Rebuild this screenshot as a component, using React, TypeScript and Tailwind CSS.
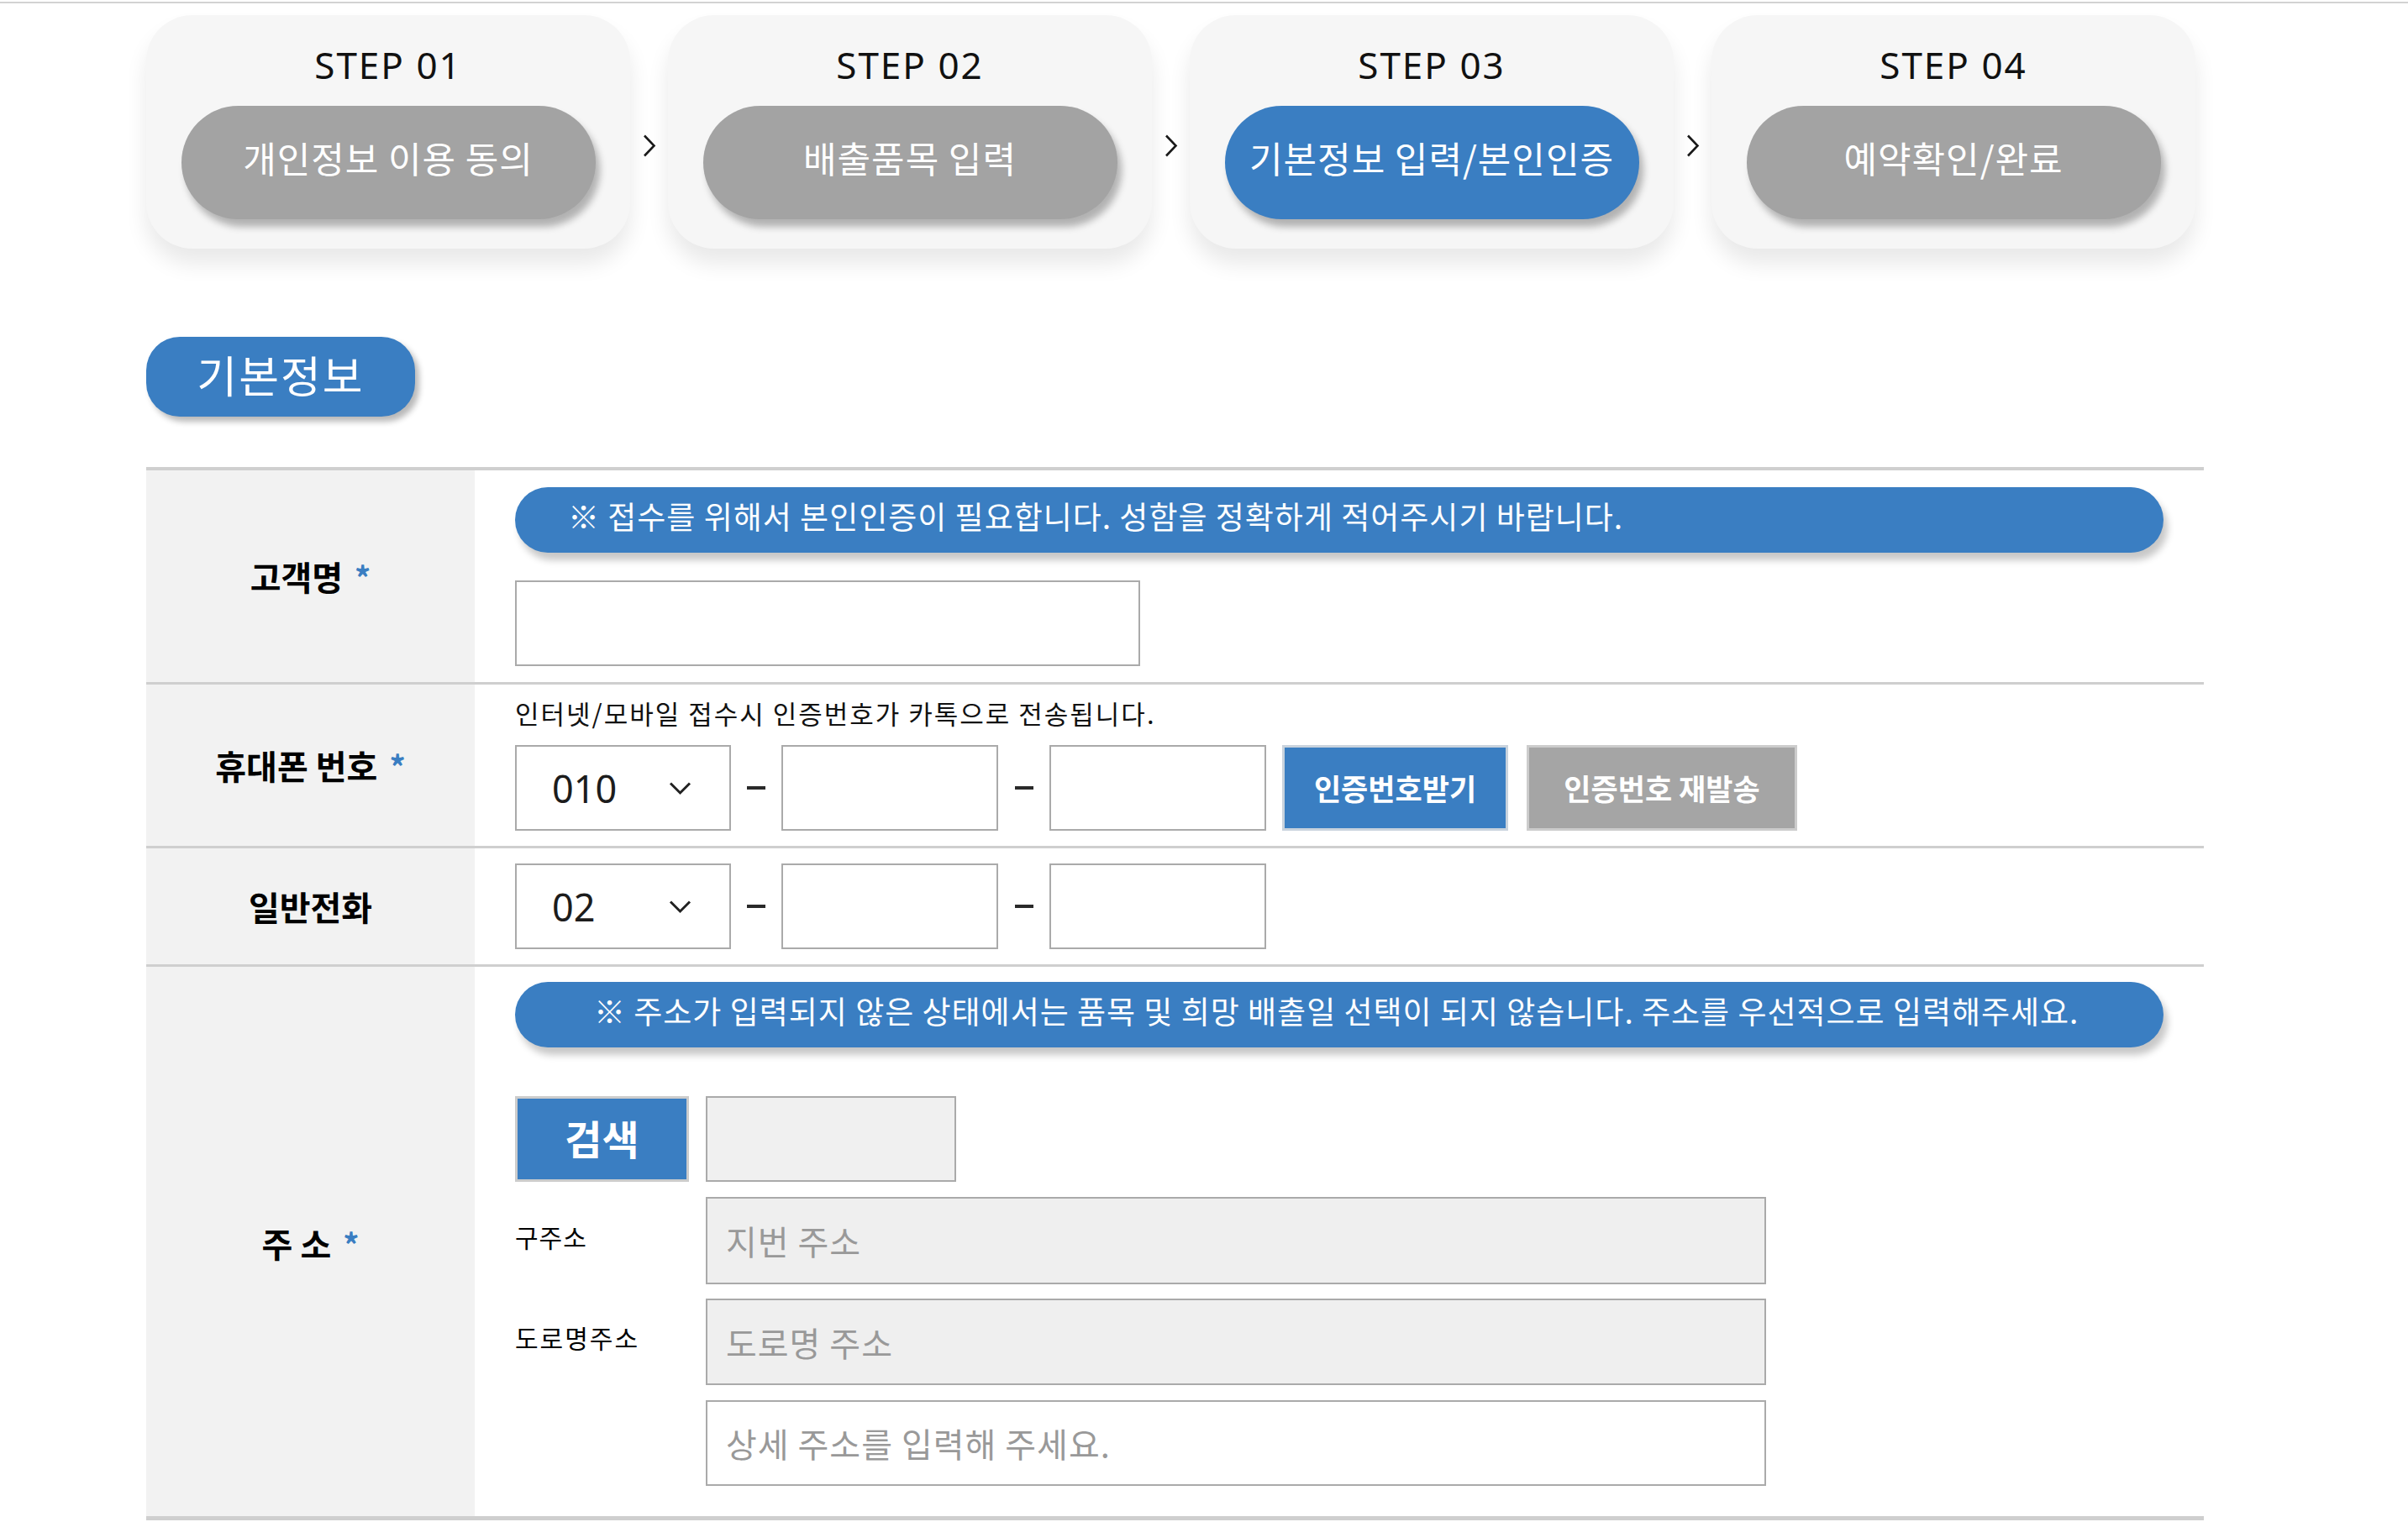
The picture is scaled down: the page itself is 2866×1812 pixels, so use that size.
import React from 'react';

const BLUE = 'bg-[#3a7ec2]';

const steps = [
  { no: 'STEP 01', label: '개인정보 이용 동의', active: false },
  { no: 'STEP 02', label: '배출품목 입력', active: false },
  { no: 'STEP 03', label: '기본정보 입력/본인인증', active: true },
  { no: 'STEP 04', label: '예약확인/완료', active: false },
];

const Chevron = () => (
  <div className="w-[45px] flex justify-center pt-[142px]">
    <svg width="16" height="27" viewBox="0 0 16 27" fill="none">
      <polyline points="2,1.5 13.5,13.5 2,25.5" stroke="#1a1a1a" strokeWidth="2.6" />
    </svg>
  </div>
);

const Star = () => (
  <span className="ml-[14px] text-[38px] font-bold text-[#3a7ec2] align-[8px]">*</span>
);

const SelectBox = ({ value }: { value: string }) => (
  <div className="w-[257px] h-[102px] border-2 border-[#aaaaaa] bg-white flex items-center justify-between pl-[42px] pr-[45px]">
    <span className="text-[45px] leading-none text-[#1c1c1c] font-['Noto_Sans',sans-serif]">{value}</span>
    <svg width="27" height="17" viewBox="0 0 27 17" fill="none">
      <polyline points="2,2.5 13.5,14 25,2.5" stroke="#222" strokeWidth="3" />
    </svg>
  </div>
);

const Dash = ({ w }: { w: string }) => (
  <div className={`${w} flex justify-center items-center`}>
    <div className="w-[22px] h-[4px] bg-[#2a2a2a]" />
  </div>
);

const Box = () => <div className="w-[258px] h-[102px] border-2 border-[#aaaaaa] bg-white" />;

const Notice = ({ children, pl }: { children: React.ReactNode; pl: string }) => (
  <div
    className={`w-[1962px] h-[78px] rounded-[42px] ${BLUE} ${pl} pb-[8px] flex items-center text-white text-[37px] tracking-[1px] shadow-[5px_9px_8px_rgba(0,0,0,0.22)]`}
  >
    {children}
  </div>
);

const App: React.FC = () => {
  return (
    <div className="w-[2866px] min-h-[1812px] bg-white pt-[2px] font-['Noto_Sans','Noto_Sans_CJK_KR',sans-serif] text-black overflow-hidden">
      <div className="h-[2px] bg-[#d2d2d2]" />

      <div className="ml-[174px] w-[2449px]">
        {/* 단계 표시 */}
        <div className="flex mt-[14px]">
          {steps.map((s, i) => (
            <React.Fragment key={s.no}>
              {i > 0 && <Chevron />}
              <div className="w-[576px] h-[278px] rounded-[55px] bg-[#f6f6f6] shadow-[0_18px_26px_rgba(0,0,0,0.09)] flex flex-col items-center pt-[37px]">
                <div className="text-[44px] leading-[44px] tracking-[2px] text-[#111]">{s.no}</div>
                <div
                  className={`mt-[27px] w-[493px] h-[135px] rounded-full ${s.active ? BLUE : 'bg-[#a3a3a3]'} shadow-[5px_9px_9px_rgba(0,0,0,0.28)] flex items-center justify-center text-white text-[43px] tracking-[1px] pb-[12px] font-['Noto_Sans_CJK_KR',sans-serif]`}
                >
                  {s.label}
                </div>
              </div>
            </React.Fragment>
          ))}
        </div>

        {/* 기본정보 뱃지 */}
        <div className={`mt-[105px] w-[320px] h-[95px] rounded-[40px] ${BLUE} flex items-center justify-center text-white text-[52px] tracking-[2px] pb-[6px] shadow-[5px_6px_7px_rgba(0,0,0,0.28)] font-['Noto_Sans_CJK_KR',sans-serif]`}>
          기본정보
        </div>

        {/* 입력 테이블 */}
        <div className="mt-[60px] border-t-[4px] border-b-[5px] border-[#cfcfcf] font-['Noto_Sans_CJK_KR',sans-serif]">
          {/* 고객명 */}
          <div className="flex border-b-[3px] border-[#cfcfcf]">
            <div className="w-[391px] bg-[#f2f2f2] flex items-center justify-center text-[40px] font-bold">
              고객명<Star />
            </div>
            <div className="flex-1 pl-[48px] pt-[20px] pb-[19px]">
              <Notice pl="pl-[63px]">※ 접수를 위해서 본인인증이 필요합니다. 성함을 정확하게 적어주시기 바랍니다.</Notice>
              <div className="mt-[33px] w-[744px] h-[102px] border-2 border-[#aaaaaa] bg-white" />
            </div>
          </div>

          {/* 휴대폰 번호 */}
          <div className="flex border-b-[3px] border-[#cfcfcf]">
            <div className="w-[391px] bg-[#f2f2f2] flex items-center justify-center text-[40px] font-bold">
              휴대폰 번호<Star />
            </div>
            <div className="flex-1 pl-[48px] pt-[11px] pb-[18px]">
              <div className="text-[31px] leading-[46px] tracking-[2px] text-[#111]">인터넷/모바일 접수시 인증번호가 카톡으로 전송됩니다.</div>
              <div className="mt-[15px] flex items-center">
                <SelectBox value="010" />
                <Dash w="w-[60px]" />
                <Box />
                <Dash w="w-[61px]" />
                <Box />
                <button className={`ml-[19px] w-[269px] h-[102px] ${BLUE} border-[3px] border-[#c9d3dd] text-white text-[35px] font-bold`}>
                  인증번호받기
                </button>
                <button className="ml-[22px] w-[322px] h-[102px] bg-[#a5a5a5] border-[3px] border-[#cccccc] text-white text-[35px] font-bold">
                  인증번호 재발송
                </button>
              </div>
            </div>
          </div>

          {/* 일반전화 */}
          <div className="flex border-b-[3px] border-[#cfcfcf]">
            <div className="w-[391px] bg-[#f2f2f2] flex items-center justify-center text-[40px] font-bold">
              일반전화
            </div>
            <div className="flex-1 pl-[48px] py-[18px] flex items-center">
              <SelectBox value="02" />
              <Dash w="w-[60px]" />
              <Box />
              <Dash w="w-[61px]" />
              <Box />
            </div>
          </div>

          {/* 주소 */}
          <div className="flex">
            <div className="w-[391px] bg-[#f2f2f2] flex items-center justify-center text-[40px] font-bold pt-[4px]">
              주 소<Star />
            </div>
            <div className="flex-1 pl-[48px] pt-[18px] pb-[36px]">
              <Notice pl="pl-[94px]">※ 주소가 입력되지 않은 상태에서는 품목 및 희망 배출일 선택이 되지 않습니다. 주소를 우선적으로 입력해주세요.</Notice>
              <div className="mt-[58px] flex">
                <button className={`w-[207px] h-[102px] ${BLUE} border-[3px] border-[#cccccc] text-white text-[48px] font-bold pb-[4px]`}>
                  검색
                </button>
                <div className="ml-[20px] w-[298px] h-[102px] bg-[#f0f0f0] border-2 border-[#aaaaaa]" />
              </div>
              <div className="mt-[18px] flex items-center">
                <div className="w-[227px] text-[30px] tracking-[1px] pb-[10px]">구주소</div>
                <div className="w-[1262px] h-[104px] bg-[#efefef] border-2 border-[#aaaaaa] flex items-center pl-[22px] text-[40px] tracking-[1px] text-[#999]">
                  지번 주소
                </div>
              </div>
              <div className="mt-[17px] flex items-center">
                <div className="w-[227px] text-[30px] tracking-[2px] pb-[10px]">도로명주소</div>
                <div className="w-[1262px] h-[103px] bg-[#efefef] border-2 border-[#aaaaaa] flex items-center pl-[22px] text-[40px] tracking-[1px] text-[#999]">
                  도로명 주소
                </div>
              </div>
              <div className="mt-[18px] flex items-center">
                <div className="w-[227px]" />
                <div className="w-[1262px] h-[102px] bg-white border-2 border-[#aaaaaa] flex items-center pl-[22px] text-[40px] tracking-[1px] text-[#999]">
                  상세 주소를 입력해 주세요.
                </div>
              </div>
            </div>
          </div>
        </div>
      </div>
    </div>
  );
};

export default App;
